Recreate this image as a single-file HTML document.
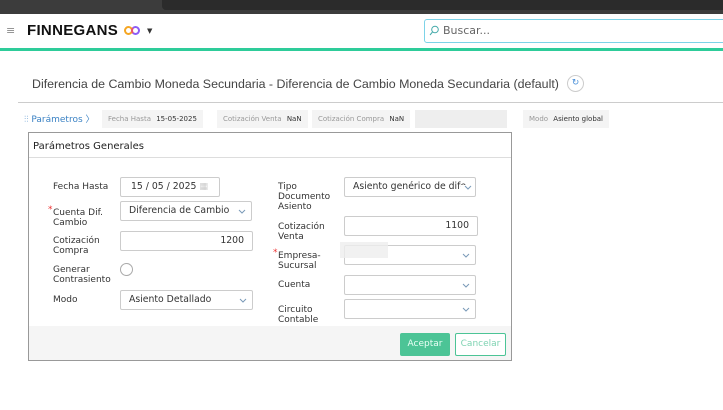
<!DOCTYPE html><html><head><meta charset="utf-8"><style>
*{box-sizing:border-box;margin:0;padding:0}
body{width:723px;height:410px;overflow:hidden;background:#fff;font-family:"DejaVu Sans","Liberation Sans",sans-serif;position:relative;color:#333}
.a{position:absolute}
.lbl{position:absolute;font-size:9px;line-height:10px;color:#333}
.inp{position:absolute;border:1px solid #ccc;border-radius:2px;background:#fff;height:20px;font-size:9.3px;line-height:18px;padding:0 8px;color:#333;white-space:nowrap;overflow:hidden}
.chev{position:absolute;right:5px;top:7px;width:8px;height:5px}
.chip{position:absolute;top:110px;height:18px;background:#f4f4f4;font-size:7px;line-height:18px;padding:0 6px;color:#999;white-space:nowrap}
.chip b{color:#333;font-weight:normal;margin-left:3px}
</style></head><body>
<div class="a" style="left:0;top:0;width:723px;height:14px;background:#3c3c3c"></div>
<div class="a" style="left:162px;top:0;width:561px;height:10px;background:#2b2b2b;border-radius:0 0 0 4px"></div>
<div class="a" style="left:6px;top:24px;font-size:11px;color:#888">≡</div>
<div class="a" style="left:27px;top:22px;font-size:15px;font-weight:bold;color:#111;font-family:'Liberation Sans',sans-serif;letter-spacing:0.3px">FINNEGANS</div>
<div class="a" style="left:124px;top:26px;width:9px;height:9px;border:2.5px solid #f5a623;border-radius:50%"></div>
<div class="a" style="left:131px;top:26px;width:9px;height:9px;border:2.5px solid #8b5cf6;border-radius:50%;border-left-color:#e94e77"></div>
<div class="a" style="left:147px;top:27px;font-size:7px;color:#333">▼</div>
<div class="a" style="left:424px;top:19px;width:310px;height:24px;border:1px solid #7dd3e8;border-radius:3px;font-size:11px;line-height:22px;padding-left:18px;color:#666">Buscar...</div>
<svg class="a" style="left:429px;top:25px" width="10" height="11"><circle cx="6" cy="4.5" r="3.3" fill="none" stroke="#4aa" stroke-width="1"/><line x1="3.5" y1="7" x2="1" y2="10" stroke="#4aa"/></svg>
<div class="a" style="left:0;top:48px;width:723px;height:3px;background:#2ecc9a"></div>
<div class="a" style="left:32px;top:77px;font-size:12.4px;color:#444;font-family:'Liberation Sans',sans-serif;white-space:nowrap">Diferencia de Cambio Moneda Secundaria - Diferencia de Cambio Moneda Secundaria (default)</div>
<div class="a" style="left:567px;top:75px;width:17px;height:17px;border:1px solid #ccc;border-radius:50%;font-size:9px;line-height:15px;text-align:center;color:#4a90d9">↻</div>
<div class="a" style="left:18px;top:102px;width:705px;height:1px;background:#ccc"></div>
<div class="a" style="left:24px;top:112px;font-size:9px;color:#3b82c4;white-space:nowrap">⫶⫶ Parámetros 〉</div>
<div class="chip" style="left:102px">Fecha Hasta <b>15-05-2025</b></div>
<div class="chip" style="left:217px">Cotización Venta <b>NaN</b></div>
<div class="chip" style="left:312px">Cotización Compra <b>NaN</b></div>
<div class="chip" style="left:415px;width:92px;background:#eee"></div>
<div class="chip" style="left:523px">Modo <b>Asiento global</b></div>
<div class="a" style="left:28px;top:132px;width:484px;height:229px;border:1px solid #999;background:#fff">
<div class="a" style="left:0;top:0;width:482px;height:25px;border-bottom:1px solid #ddd;font-size:10px;line-height:27px;padding-left:4px;color:#222">Parámetros Generales</div>
<div class="a" style="left:0;top:193px;width:482px;height:34px;background:#f5f5f5"></div>
<div class="a" style="left:371px;top:200px;width:50px;height:23px;background:#4cc496;border-radius:2px;color:#e8fff5;font-size:9px;line-height:23px;text-align:center">Aceptar</div>
<div class="a" style="left:426px;top:200px;width:51px;height:23px;border:1px solid #4cc496;border-radius:2px;color:#7fd3b2;font-size:9px;line-height:21px;text-align:center;background:#fff">Cancelar</div>
</div>
<div class="lbl" style="left:53px;top:182px">Fecha Hasta</div>
<div class="inp" style="left:120px;top:177px;width:100px;padding-left:10px">15 / 05 / 2025 <span style="color:#ccc">▦</span></div>
<div class="a" style="left:48px;top:205px;color:#e33;font-size:9px">*</div>
<div class="lbl" style="left:53px;top:208px">Cuenta Dif.<br>Cambio</div>
<div class="inp" style="left:120px;top:201px;width:132px">Diferencia de Cambio<svg class="chev"><path d="M1 1l3 3 3-3" fill="none" stroke="#7a9ab8"/></svg></div>
<div class="lbl" style="left:53px;top:236px">Cotización<br>Compra</div>
<div class="inp" style="left:120px;top:231px;width:133px;text-align:right">1200</div>
<div class="lbl" style="left:53px;top:265px">Generar<br>Contrasiento</div>
<div class="a" style="left:120px;top:263px;width:13px;height:13px;border:1px solid #aaa;border-radius:50%"></div>
<div class="lbl" style="left:53px;top:295px">Modo</div>
<div class="inp" style="left:120px;top:290px;width:133px">Asiento Detallado<svg class="chev"><path d="M1 1l3 3 3-3" fill="none" stroke="#7a9ab8"/></svg></div>
<div class="lbl" style="left:278px;top:182px">Tipo<br>Documento<br>Asiento</div>
<div class="inp" style="left:344px;top:177px;width:132px;padding-right:18px">Asiento genérico de dife<svg class="chev" style="background:#fff;width:14px;right:0;padding:0 3px"><path d="M1 1l3 3 3-3" fill="none" stroke="#7a9ab8"/></svg></div>
<div class="lbl" style="left:278px;top:222px">Cotización<br>Venta</div>
<div class="inp" style="left:344px;top:216px;width:134px;text-align:right">1100</div>
<div class="a" style="left:273px;top:248px;color:#e33;font-size:9px">*</div>
<div class="lbl" style="left:278px;top:251px">Empresa-<br>Sucursal</div>
<div class="inp" style="left:344px;top:245px;width:132px"><svg class="chev"><path d="M1 1l3 3 3-3" fill="none" stroke="#7a9ab8"/></svg></div>
<div class="a" style="left:340px;top:242px;width:48px;height:16px;background:#eee;opacity:.8"></div>
<div class="lbl" style="left:278px;top:280px">Cuenta</div>
<div class="inp" style="left:344px;top:275px;width:132px"><svg class="chev"><path d="M1 1l3 3 3-3" fill="none" stroke="#7a9ab8"/></svg></div>
<div class="lbl" style="left:278px;top:305px">Circuito<br>Contable</div>
<div class="inp" style="left:344px;top:299px;width:132px"><svg class="chev"><path d="M1 1l3 3 3-3" fill="none" stroke="#7a9ab8"/></svg></div>
</body></html>
